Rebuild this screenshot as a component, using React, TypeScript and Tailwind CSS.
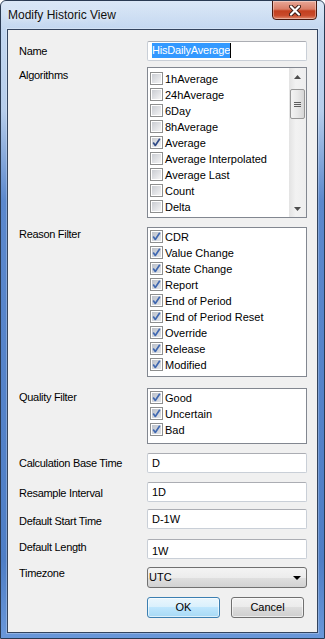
import React from 'react';

const algorithms = [
  { name: '1hAverage', checked: false },
  { name: '24hAverage', checked: false },
  { name: '6Day', checked: false },
  { name: '8hAverage', checked: false },
  { name: 'Average', checked: true },
  { name: 'Average Interpolated', checked: false },
  { name: 'Average Last', checked: false },
  { name: 'Count', checked: false },
  { name: 'Delta', checked: false },
];

const reasons = [
  'CDR',
  'Value Change',
  'State Change',
  'Report',
  'End of Period',
  'End of Period Reset',
  'Override',
  'Release',
  'Modified',
];

const qualities = ['Good', 'Uncertain', 'Bad'];

// Win7 style check box, 13x13
const CheckBox: React.FC<{ checked: boolean; gray?: boolean }> = ({ checked, gray }) => (
  <div className="w-[13px] h-[13px] shrink-0 mt-[1px] border border-[#8e8f8f] bg-white p-[1px]">
    <div
      className={`w-full h-full relative ${
        gray
          ? 'bg-[linear-gradient(135deg,#bcc1ca,#e2e4e8)]'
          : 'bg-[linear-gradient(135deg,#c9ccd2,#f4f4f5)]'
      }`}
    >
      {checked && (
        <svg className="absolute left-[-1px] top-[-1px]" width="11" height="11" viewBox="0 0 11 11">
          <path
            d="M2.2 5.6 L4.3 8.4 L8.8 1.8"
            fill="none"
            stroke={gray ? '#4068b0' : '#2f4a86'}
            strokeWidth="1.7"
            strokeLinejoin="round"
          />
        </svg>
      )}
    </div>
  </div>
);

const Item: React.FC<{ label: string; checked: boolean; gray?: boolean }> = ({ label, checked, gray }) => (
  <div className="flex h-[16px] pl-[2px] items-start">
    <CheckBox checked={checked} gray={gray} />
    <span className="ml-[2px] leading-[16px] whitespace-nowrap">{label}</span>
  </div>
);

const Label: React.FC<{ pt: string; children: React.ReactNode }> = ({ pt, children }) => (
  <div className={`w-[128px] shrink-0 leading-[13px] tracking-[-0.3px] whitespace-nowrap ${pt}`}>{children}</div>
);

const TextBox: React.FC<{ value: string; pt?: string }> = ({ value, pt }) => (
  <div
    className={`w-[160px] h-[20px] bg-white border border-[#c9cfd7] border-t-[#abadb3] rounded-[2px] pl-[4px] leading-[18px] ${pt ?? ''}`}
  >
    {value}
  </div>
);

const Triangle: React.FC<{ down?: boolean }> = ({ down }) => (
  <svg width="7" height="4" viewBox="0 0 7 4">
    <path d={down ? 'M0 0 H7 L3.5 4 Z' : 'M0 4 H7 L3.5 0 Z'} fill="#4d4d4d" />
  </svg>
);

const ScrollBar: React.FC = () => (
  <div className="w-[17px] shrink-0 flex flex-col bg-[linear-gradient(to_right,#e3e3e3,#f2f2f2_40%,#eeeeee)]">
    <div className="h-[17px] flex items-center justify-center">
      <Triangle />
    </div>
    <div className="mt-[4px] mx-[1px] h-[30px] rounded-[2px] border border-[#979797] bg-[linear-gradient(to_right,#f3f3f3,#e8e8e8_50%,#d6d6d6)] flex flex-col items-center justify-center gap-[1px]">
      <div className="w-[7px] h-[1px] bg-[#5e5e5e]" />
      <div className="w-[7px] h-[1px] bg-[#5e5e5e]" />
      <div className="w-[7px] h-[1px] bg-[#5e5e5e]" />
    </div>
    <div className="mt-auto h-[17px] flex items-center justify-center">
      <Triangle down />
    </div>
  </div>
);

const App: React.FC = () => {
  return (
    <div className="w-[325px] h-[639px] flex flex-col rounded-t-[6px] border border-[#2a3a52] bg-[linear-gradient(180deg,#c8dbf2_0px,#b6cdeb_110px,#5b88cd_200px,#4e7ec6_560px,#6a98da_639px)] [font-family:'Liberation_Sans',Arial,sans-serif] text-[11px] text-black overflow-hidden">
      {/* Title bar */}
      <div className="h-[28px] shrink-0 flex justify-between bg-[linear-gradient(180deg,rgba(255,255,255,0.35),rgba(255,255,255,0))]">
        <div className="pl-[7px] pt-[7px] text-[12px] leading-[14px] text-[#101010] [text-shadow:0_0_6px_rgba(255,255,255,0.95)]">
          Modify Historic View
        </div>
        <div className="mr-[7px] mt-[-1px] w-[45px] h-[20px] rounded-b-[4px] border border-[#47180f] bg-[linear-gradient(180deg,#e8a797_0%,#d97d67_45%,#c3401f_55%,#c84a2b_80%,#e08a6e_100%)] shadow-[inset_0_0_0_1px_rgba(255,255,255,0.35)] flex items-center justify-center">
          <svg width="12" height="11" viewBox="0 0 12 11">
            <path d="M2 1.5 L10 9.5 M10 1.5 L2 9.5" stroke="#3a1a14" strokeWidth="4" strokeLinecap="round" />
            <path d="M2 1.5 L10 9.5 M10 1.5 L2 9.5" stroke="#ffffff" strokeWidth="2.2" strokeLinecap="round" />
          </svg>
        </div>
      </div>

      {/* Client area */}
      <div className="mx-[6px] mb-[5px] h-[604px] border border-[#33445e] bg-[#f0f0f0] pl-[11px] flex flex-col shadow-[0_0_0_1px_rgba(255,255,255,0.25)]">
        <div className="flex mt-[11px]">
          <Label pt="pt-[4px]">Name</Label>
          <div className="w-[160px] h-[20px] bg-white border border-[#c9cfd7] border-t-[#abadb3] rounded-[2px] pl-[4px] flex items-start">
            <span className="mt-[1px] h-[15px] w-[78px] leading-[15px] bg-[#3399ff] text-white whitespace-nowrap overflow-hidden tracking-[-0.2px]">
              HisDailyAverage
            </span>
            <span className="mt-[1px] w-[1px] h-[15px] bg-black" />
          </div>
        </div>

        <div className="flex mt-[6px]">
          <Label pt="pt-[2px]">Algorithms</Label>
          <div className="w-[160px] h-[151px] bg-white border border-[#828790] flex">
            <div className="flex-1 pt-[3px] overflow-hidden">
              {algorithms.map(a => (
                <Item key={a.name} label={a.name} checked={a.checked} />
              ))}
            </div>
            <ScrollBar />
          </div>
        </div>

        <div className="flex mt-[9px]">
          <Label pt="pt-[1px]">Reason Filter</Label>
          <div className="w-[160px] h-[150px] bg-white border border-[#828790] pt-[1px]">
            {reasons.map(r => (
              <Item key={r} label={r} checked gray />
            ))}
          </div>
        </div>

        <div className="flex mt-[11px]">
          <Label pt="pt-[3px]">Quality Filter</Label>
          <div className="w-[160px] h-[56px] bg-white border border-[#828790] pt-[1px]">
            {qualities.map(q => (
              <Item key={q} label={q} checked gray />
            ))}
          </div>
        </div>

        <div className="flex mt-[9px]">
          <Label pt="pt-[4px]">Calculation Base Time</Label>
          <TextBox value="D" />
        </div>

        <div className="flex mt-[9px]">
          <Label pt="pt-[5px]">Resample Interval</Label>
          <TextBox value="1D" />
        </div>

        <div className="flex mt-[7px]">
          <Label pt="pt-[6px]">Default Start Time</Label>
          <TextBox value="D-1W" />
        </div>

        <div className="flex mt-[10px]">
          <Label pt="pt-[2px]">Default Length</Label>
          <TextBox value="1W" pt="pt-[2px]" />
        </div>

        <div className="flex mt-[8px]">
          <Label pt="pt-[0px]">Timezone</Label>
          <div className="w-[160px] h-[21px] rounded-[3px] border border-[#707070] bg-[linear-gradient(180deg,#f4f4f4,#ececec_50%,#e0e0e0_50%,#d2d2d2)] flex items-center justify-between pl-[1px] pr-[5px] leading-[19px]">
            <span>UTC</span>
            <svg width="8" height="4" viewBox="0 0 8 4">
              <path d="M0 0 H8 L4 4 Z" fill="#000000" />
            </svg>
          </div>
        </div>

        <div className="flex mt-[9px] pl-[128px]">
          <button className="w-[73px] h-[21px] rounded-[3px] border border-[#3c7fb1] bg-[linear-gradient(180deg,#eaf6fd,#d9f0fc_50%,#bee6fd_50%,#a7d9f5)] shadow-[inset_0_0_0_1px_rgba(255,255,255,0.6)] leading-[19px] text-center text-[11px]">
            OK
          </button>
          <button className="ml-[11px] w-[73px] h-[21px] rounded-[3px] border border-[#707070] bg-[linear-gradient(180deg,#f2f2f2,#ebebeb_50%,#dddddd_50%,#cfcfcf)] shadow-[inset_0_0_0_1px_rgba(255,255,255,0.6)] leading-[19px] text-center text-[11px]">
            Cancel
          </button>
        </div>
      </div>
    </div>
  );
};

export default App;
